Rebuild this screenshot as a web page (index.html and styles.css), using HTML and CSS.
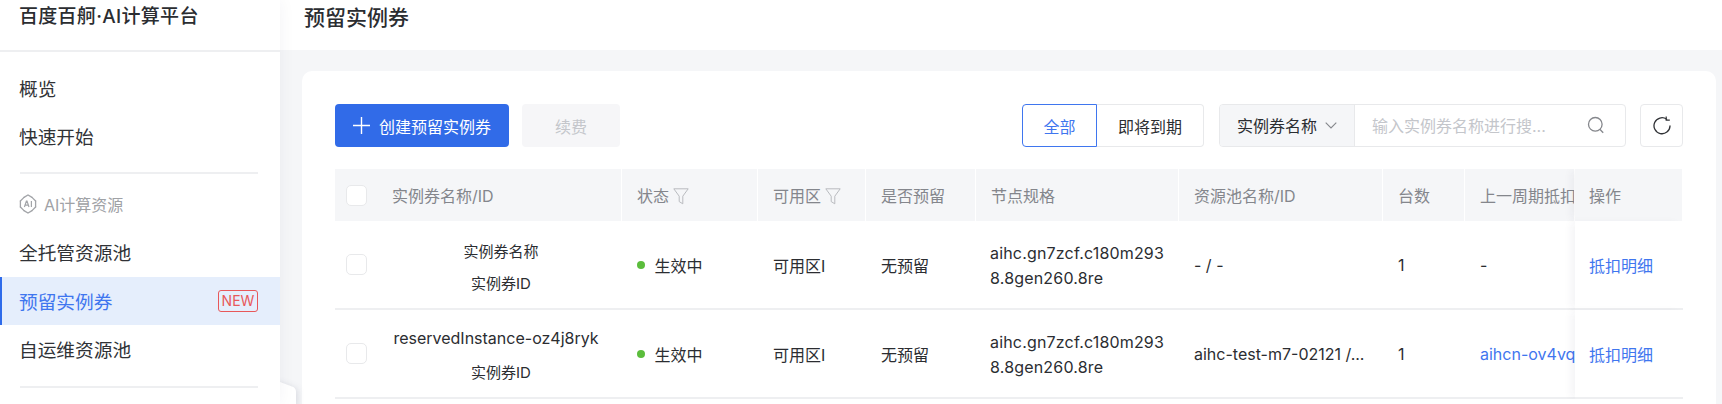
FILE: index.html
```html
<!DOCTYPE html>
<html lang="zh-CN">
<head>
<meta charset="utf-8">
<title>预留实例券</title>
<link rel="stylesheet" href="styles.css">
</head>
<body>
<div class="app">
  <aside class="sidebar">
    <div class="brand">百度百舸·AI计算平台</div>
    <nav class="nav">
      <a class="nav-item">概览</a>
      <a class="nav-item">快速开始</a>
      <div class="nav-divider"></div>
      <div class="nav-group">
        <svg class="group-icon" viewBox="0 0 18 20" fill="none" stroke="#a3a5a9" stroke-width="1.3">
          <path d="M5 3.4 9 1l4 2.4M16.6 7v6M13 16.6 9 19l-4-2.4M1.4 13V7" stroke-linecap="round"/>
          <path d="M1.4 7 5 3.4M13 3.4 16.6 7M16.6 13 13 16.6M5 16.6 1.4 13" stroke-linecap="round"/>
          <path d="M5.4 13 7.4 7h.6l2 6M6 11.2h3.4M12.4 7v6" stroke-width="1.2"/>
        </svg>
        <span>AI计算资源</span>
      </div>
      <a class="nav-item">全托管资源池</a>
      <a class="nav-item is-active">预留实例券<span class="badge-new">NEW</span></a>
      <a class="nav-item">自运维资源池</a>
      <div class="nav-divider nav-divider-last"></div>
    </nav>
  </aside>

  <main class="main">
    <header class="page-header"><h1>预留实例券</h1></header>
    <div class="content">
      <section class="card">
        <div class="toolbar">
          <button class="btn btn-primary">
            <svg class="plus" viewBox="0 0 17 17" fill="none" stroke="#fff" stroke-width="1.4"><path d="M8.5 0v17M0 8.5h17"/></svg>
            创建预留实例券
          </button>
          <button class="btn btn-disabled">续费</button>
          <div class="spacer"></div>
          <div class="segment">
            <button class="seg seg-active">全部</button>
            <button class="seg seg-rest">即将到期</button>
          </div>
          <div class="search">
            <div class="search-select">实例券名称
              <svg class="chevron" viewBox="0 0 12 7" fill="none" stroke="#85878c" stroke-width="1.1"><path d="M.7.7 6 6 11.3.7"/></svg>
            </div>
            <div class="search-input">
              <span class="placeholder">输入实例券名称进行搜...</span>
              <svg class="search-icon" viewBox="0 0 18 18" fill="none" stroke="#85878c" stroke-width="1.3"><circle cx="8.3" cy="8.3" r="6.8"/><path d="m12.8 13.2 3.4 3.6"/></svg>
            </div>
          </div>
          <button class="btn-icon">
            <svg class="refresh" viewBox="0 0 18 19" fill="none" stroke="#303236" stroke-width="1.3"><path d="M13.6 3.2A8 8 0 1 0 17 10" stroke-linecap="round"/><path d="M13.2 .6v3.6h3.6" fill="none" stroke-width="1.2"/></svg>
          </button>
        </div>

        <div class="table-wrap">
          <table class="table">
            <colgroup>
              <col class="c-check"><col class="c-name"><col class="c-status"><col class="c-az"><col class="c-res"><col class="c-spec"><col class="c-pool"><col class="c-count"><col class="c-prev"><col class="c-op">
            </colgroup>
            <thead>
              <tr>
                <th class="cell-check"><span class="checkbox"></span></th>
                <th class="th-name">实例券名称/ID</th>
                <th>状态<svg class="funnel" viewBox="0 0 16 17" fill="none" stroke="#b9bbbf" stroke-width="1"><path d="M.8.8h14.4L9.8 8.2v7.6L6.2 13.6V8.2Z"/></svg></th>
                <th>可用区<svg class="funnel" viewBox="0 0 16 17" fill="none" stroke="#b9bbbf" stroke-width="1"><path d="M.8.8h14.4L9.8 8.2v7.6L6.2 13.6V8.2Z"/></svg></th>
                <th>是否预留</th>
                <th>节点规格</th>
                <th>资源池名称/ID</th>
                <th>台数</th>
                <th>上一周期抵扣金额</th>
                <th class="col-fixed">操作</th>
              </tr>
            </thead>
            <tbody>
              <tr>
                <td class="cell-check"><span class="checkbox"></span></td>
                <td class="td-name"><div class="name-line">实例券名称</div><div class="name-line">实例券ID</div></td>
                <td><span class="status"><i class="dot"></i>生效中</span></td>
                <td>可用区I</td>
                <td>无预留</td>
                <td class="td-spec">aihc.gn7zcf.c180m293<br>8.8gen260.8re</td>
                <td>- / -</td>
                <td>1</td>
                <td>-</td>
                <td class="col-fixed"><a class="link">抵扣明细</a></td>
              </tr>
              <tr>
                <td class="cell-check"><span class="checkbox"></span></td>
                <td class="td-name td-name-long"><div class="name-line name-line-tall">reservedInstance-oz4j8ryk</div><div class="name-line">实例券ID</div></td>
                <td><span class="status"><i class="dot"></i>生效中</span></td>
                <td>可用区I</td>
                <td>无预留</td>
                <td class="td-spec">aihc.gn7zcf.c180m293<br>8.8gen260.8re</td>
                <td>aihc-test-m7-02121 /...</td>
                <td>1</td>
                <td><a class="link">aihcn-ov4vqxyz</a></td>
                <td class="col-fixed"><a class="link">抵扣明细</a></td>
              </tr>
            </tbody>
          </table>
        </div>
      </section>
    </div>
  </main>
</div>

<svg class="popup-corner" viewBox="0 0 40 26" width="40" height="26"><path d="M0 2H10L22 6.6Q26 8 26 12V26H0Z" fill="#fff"/></svg>
</body>
</html>
```
FILE: styles.css
```css
* { box-sizing: border-box; }
html, body { margin: 0; height: 100%; overflow: hidden; }
body {
  font-family: Inter, "Noto Sans CJK SC", "Liberation Sans", sans-serif;
  color: #2b2d31;
  background: #f5f6f8;
  font-size: 16px;
}
.app { display: flex; height: 404px; }

/* sidebar */
.sidebar {
  width: 280px;
  flex: none;
  background: #fff;
  box-shadow: 0 0 16px rgba(30, 40, 70, .05);
  position: relative;
  z-index: 2;
}
.brand {
  height: 52px;
  padding: 5px 19px 0;
  font-size: 19px;
  letter-spacing: .3px;
  line-height: 24px;
  font-weight: 500;
  color: #2b2d31;
  border-bottom: 2px solid #eeeff1;
}
.nav { padding-top: 12px; display: flex; flex-direction: column; }
.nav-item {
  height: 48.5px;
  padding: 0 22px 2px 19px;
  display: flex;
  align-items: center;
  justify-content: space-between;
  font-size: 18.7px;
  color: #303236;
}
.nav-item.is-active {
  color: #3f76ef;
  background: #e5eefc;
  box-shadow: inset 2px 0 0 #2f6bea;
  padding-bottom: 0;
}
.badge-new {
  width: 40px;
  height: 22px;
  display: flex;
  align-items: center;
  justify-content: center;
  border: 1.5px solid #e8585a;
  border-radius: 3px;
  color: #e8585a;
  font-size: 14px;
  line-height: 1;
}
.nav-divider { height: 2px; margin: 11px 22px 0 20px; background: #eeeff1; }
.nav-divider-last { margin-top: 12px; }
.nav-group {
  height: 44px;
  margin-top: 10px;
  padding: 0 0 4px 19px;
  display: flex;
  align-items: center;
  gap: 7px;
  font-size: 16px;
  color: #a0a2a6;
}
.group-icon { width: 18px; height: 20px; }

/* main */
.main { flex: 1; min-width: 0; display: flex; flex-direction: column; }
.page-header { height: 50px; flex: none; background: #fff; padding: 3px 0 0 24px; }
.page-header h1 { margin: 0; font-size: 21px; line-height: 30px; font-weight: 500; color: #2b2d31; }
.content { flex: 1; padding: 21px 6px 0 22px; min-height: 0; }
.card { height: 100%; background: #fff; border-radius: 10px 10px 0 0; padding: 33px 33px 0; }

/* toolbar */
.toolbar { display: flex; align-items: stretch; height: 43px; }
.spacer { flex: 1; }
button { font: inherit; cursor: pointer; padding: 0; }
.btn {
  border: 0;
  border-radius: 4px;
  height: 43px;
  display: flex;
  align-items: center;
  justify-content: center;
}
.btn-primary { width: 174px; gap: 9px; background: #316be8; color: #fff; font-size: 16px; }
.plus { width: 17px; height: 17px; }
.btn-disabled { width: 98px; margin-left: 13px; background: #f6f6f8; color: #c4c6cb; }
.segment { display: flex; }
.seg { height: 43px; background: #fff; color: #2b2d31; }
.seg-active {
  width: 75px;
  border: 1.5px solid #3f76ef;
  border-radius: 4px 0 0 4px;
  color: #3f76ef;
}
.seg-rest {
  width: 107px;
  border: 1.5px solid #e8e9eb;
  border-left: 0;
  border-radius: 0 4px 4px 0;
}
.search {
  width: 407px;
  margin-left: 15px;
  display: flex;
  border: 1.5px solid #e8e9eb;
  border-radius: 4px;
  overflow: hidden;
}
.search-select {
  width: 135px;
  flex: none;
  padding: 0 0 1px 17px;
  display: flex;
  align-items: center;
  gap: 8px;
  background: #f5f6f8;
  border-right: 1.5px solid #e8e9eb;
  color: #2b2d31;
}
.chevron { width: 12px; height: 7px; }
.search-input { flex: 1; display: flex; align-items: center; justify-content: space-between; padding: 0 20px 2px 17px; }
.placeholder { color: #c4c6cb; font-size: 16px; }
.search-icon { width: 18px; height: 18px; }
.btn-icon {
  width: 43px;
  margin-left: 14px;
  background: #fff;
  border: 1.5px solid #e8e9eb;
  border-radius: 4px;
  display: flex;
  align-items: center;
  justify-content: center;
}
.refresh { width: 18px; height: 19px; }

/* table */
.table-wrap { margin-top: 22px; overflow: hidden; }
.table { width: 100%; table-layout: fixed; border-collapse: separate; border-spacing: 0; }
.c-check { width: 45px; }
.c-name { width: 242px; }
.c-status { width: 136px; }
.c-az { width: 108px; }
.c-res { width: 110px; }
.c-spec { width: 203px; }
.c-pool { width: 204px; }
.c-count { width: 82px; }
.c-prev { width: 110px; }
.table th {
  height: 52px;
  padding: 0 0 0 15px;
  text-align: left;
  font-weight: 400;
  font-size: 16px;
  color: #84868c;
  background: #f5f6f8;
  border-right: 1px solid #fff;
  white-space: nowrap;
  overflow: hidden;
}
.table td {
  height: 89px;
  padding: 0 0 0 15px;
  font-size: 16px;
  color: #2b2d31;
  border-bottom: 2px solid #eeeff1;
  white-space: nowrap;
  overflow: hidden;
}
.table .cell-check { padding: 0 0 0 11px; border-right: 0; }
.table .th-name { padding-left: 12px; }
.table .td-name { padding: 7px 0 0; text-align: center; font-size: 15px; }
.table .td-name-long { padding-top: 1px; }
.name-line { line-height: 32px; }
.name-line-tall { line-height: 36px; margin: 0 10px 1px 0; font-size: 16px; }
.table .td-spec { font-size: 16px; letter-spacing: .18px; line-height: 25px; padding: 2px 0 0 14px; }
.checkbox {
  display: block;
  width: 21px;
  height: 21px;
  background: #fff;
  border: 1.5px solid #e8e9eb;
  border-radius: 5px;
}
.funnel { width: 16px; height: 17px; margin-left: 4px; vertical-align: -3px; }
.status { display: flex; align-items: center; gap: 10px; margin-left: -0.5px; }
.dot { width: 8px; height: 8px; border-radius: 50%; background: #5bbd3c; }
.link { color: #3f76ef; }
.table .col-fixed {
  position: sticky;
  right: 0;
  padding-left: 14px;
  box-shadow: -6px 0 8px -2px rgba(30, 40, 70, .05);
}
.table td.col-fixed { background: #fff; }

/* clipped menu corner peeking out below the sidebar */
.popup-corner {
  position: absolute;
  left: 270px;
  top: 380px;
  z-index: 1;
  filter: drop-shadow(2px 1px 3px rgba(30, 40, 70, .12));
}
```
